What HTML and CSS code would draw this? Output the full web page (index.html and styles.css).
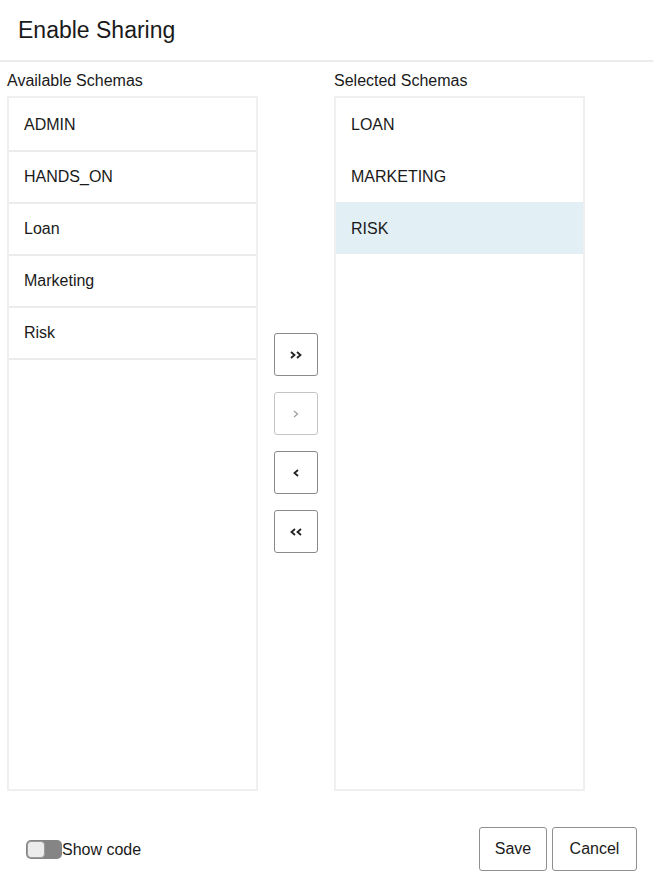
FILE: index.html
```html
<!DOCTYPE html>
<html>
<head>
<meta charset="utf-8">
<link rel="stylesheet" href="styles.css">
</head>
<body>
<div class="dialog">
  <header class="header"><h1 class="title">Enable Sharing</h1></header>
  <div class="shuttle">
    <div class="col">
      <div class="col-label">Available Schemas</div>
      <ul class="list list-divided">
        <li class="item">ADMIN</li>
        <li class="item">HANDS_ON</li>
        <li class="item">Loan</li>
        <li class="item">Marketing</li>
        <li class="item">Risk</li>
      </ul>
    </div>
    <div class="actions">
      <button class="move" aria-label="Move all right"><svg width="12" height="8" viewBox="0 0 12 8"><path d="M1 1l3.5 3-3.5 3M7 1l3.5 3-3.5 3" fill="none" stroke="currentColor" stroke-width="1.8"/></svg></button>
      <button class="move disabled" aria-label="Move right"><svg width="6" height="8" viewBox="0 0 6 8"><path d="M1 1l3.5 3-3.5 3" fill="none" stroke="currentColor" stroke-width="1.3"/></svg></button>
      <button class="move" aria-label="Move left"><svg width="6" height="8" viewBox="0 0 6 8"><path d="M5 1l-3.5 3 3.5 3" fill="none" stroke="currentColor" stroke-width="1.8"/></svg></button>
      <button class="move" aria-label="Move all left"><svg width="12" height="8" viewBox="0 0 12 8"><path d="M5 1l-3.5 3 3.5 3M11 1l-3.5 3 3.5 3" fill="none" stroke="currentColor" stroke-width="1.8"/></svg></button>
    </div>
    <div class="col">
      <div class="col-label">Selected Schemas</div>
      <ul class="list">
        <li class="item">LOAN</li>
        <li class="item">MARKETING</li>
        <li class="item selected">RISK</li>
      </ul>
    </div>
  </div>
  <footer class="footer">
    <label class="toggle"><span class="switch"><span class="knob"></span></span>Show code</label>
    <div class="btns">
      <button class="btn btn-save">Save</button>
      <button class="btn btn-cancel">Cancel</button>
    </div>
  </footer>
</div>
</body>
</html>
```

FILE: styles.css
```css
* { box-sizing: border-box; }
body {
  margin: 0;
  font-family: "Liberation Sans", Arial, sans-serif;
  color: #1a1a1a;
  background: #fff;
}
.dialog { width: 653px; height: 886px; display: flex; flex-direction: column; }
.header {
  height: 62px;
  border-bottom: 2px solid #ececec;
  padding: 16px 18px 0;
}
.title { margin: 0; font-size: 23px; font-weight: normal; line-height: 28px; }
.shuttle {
  display: flex;
  padding: 7px 0 0 7px;
}
.col { width: 251px; display: flex; flex-direction: column; }
.col-label { font-size: 16px; line-height: 20px; height: 27px; padding-top: 2px; }
.list {
  list-style: none;
  margin: 0;
  padding: 0;
  height: 695px;
  border: 2px solid #efefef;
}
.list-divided { padding-top: 2px; }
.item {
  height: 52px;
  padding-left: 15px;
  padding-top: 1px;
  font-size: 16px;
  display: flex;
  align-items: center;
}
.list-divided .item { border-bottom: 2px solid #ececec; padding-top: 0; }
.selected { background: #e2eff5; }
.actions {
  width: 76px;
  margin-top: 26px;
  display: flex;
  flex-direction: column;
  align-items: center;
  justify-content: center;
  gap: 16px;
}
.move {
  width: 44px;
  height: 43px;
  border: 1px solid #8a8a8a;
  border-radius: 3px;
  background: #fff;
  color: #222;
  padding: 0;
  display: flex;
  align-items: center;
  justify-content: center;
}
.move.disabled { border-color: #c4c4c4; color: #a0a0a0; }
.footer {
  margin-top: 36px;
  display: flex;
  align-items: center;
  justify-content: space-between;
  padding: 0 16px 0 26px;
}
.toggle { display: flex; align-items: center; font-size: 16px; padding-top: 1px; }
.switch {
  width: 36px;
  height: 19px;
  border-radius: 5px;
  background: #858585;
  padding: 1px;
  display: flex;
}
.knob {
  width: 18px;
  height: 17px;
  border-radius: 4px;
  background: #ececec;
  border: 1px solid #9a9a9a;
}
.btns { display: flex; gap: 5px; }
.btn {
  height: 44px;
  padding: 0;
  border: 1px solid #8f8f8f;
  border-radius: 3px;
  background: #fff;
  font-family: "Liberation Sans", Arial, sans-serif;
  font-size: 16px;
  color: #1a1a1a;
}
.btn-save { width: 68px; }
.btn-cancel { width: 85px; }
```
